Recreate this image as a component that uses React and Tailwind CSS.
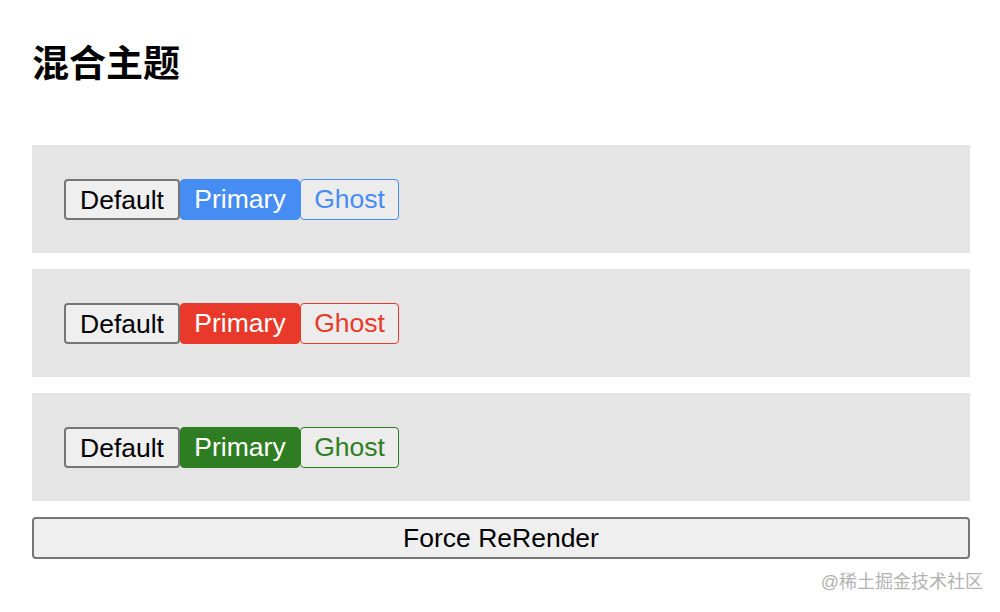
import React, { useState } from 'react'

const themes = [
  { name: 'blue', primary: 'bg-[#468df3] border-[#468df3]', ghost: 'border-[#468df3] text-[#468df3]' },
  { name: 'red', primary: 'bg-[#e8392a] border-[#e8392a]', ghost: 'border-[#e8392a] text-[#e8392a]' },
  { name: 'green', primary: 'bg-[#2f7d23] border-[#2f7d23]', ghost: 'border-[#2f7d23] text-[#2f7d23]' },
]

const ThemePanel = ({ theme }) => {
  return (
    <div className="bg-[#e5e5e5] h-[108px] px-8 flex items-center">
      <div className="flex items-center">
        <button className="h-[41px] w-[116px] bg-[#efefef] border-2 border-[#767676] rounded-[4px] text-[26.5px] text-black">Default</button>
        <button className={`h-[41px] w-[120px] border-[1.5px] rounded-[4px] text-[26.5px] text-white ${theme.primary}`}>Primary</button>
        <button className={`h-[41px] w-[99px] border-[1.5px] rounded-[4px] text-[26.5px] bg-[#ececec] ${theme.ghost}`}>Ghost</button>
      </div>
    </div>
  )
}

export default function App() {
  const [count, setCount] = useState(0)

  return (
    <div className="relative w-[1000px] h-[612px] bg-white font-['Liberation_Sans','Noto_Sans_CJK_SC',sans-serif] overflow-hidden">
      <div className="pl-8 pr-[30px] pt-[42px]">
        <h2 className="text-[37px] font-bold leading-[46px] text-black">混合主题</h2>
        <div className="mt-[57px] flex flex-col gap-4">
          {themes.map((t) => (
            <ThemePanel key={t.name + count} theme={t} />
          ))}
          <button
            onClick={() => setCount(count + 1)}
            className="h-[42px] w-full bg-[#efefef] border-2 border-[#767676] rounded-[4px] text-[26.5px] text-black"
          >
            Force ReRender
          </button>
        </div>
      </div>
      <div className="absolute right-[17px] top-[570px] text-[18px] leading-[24px] text-[#b3b3b3]">@稀土掘金技术社区</div>
    </div>
  )
}
